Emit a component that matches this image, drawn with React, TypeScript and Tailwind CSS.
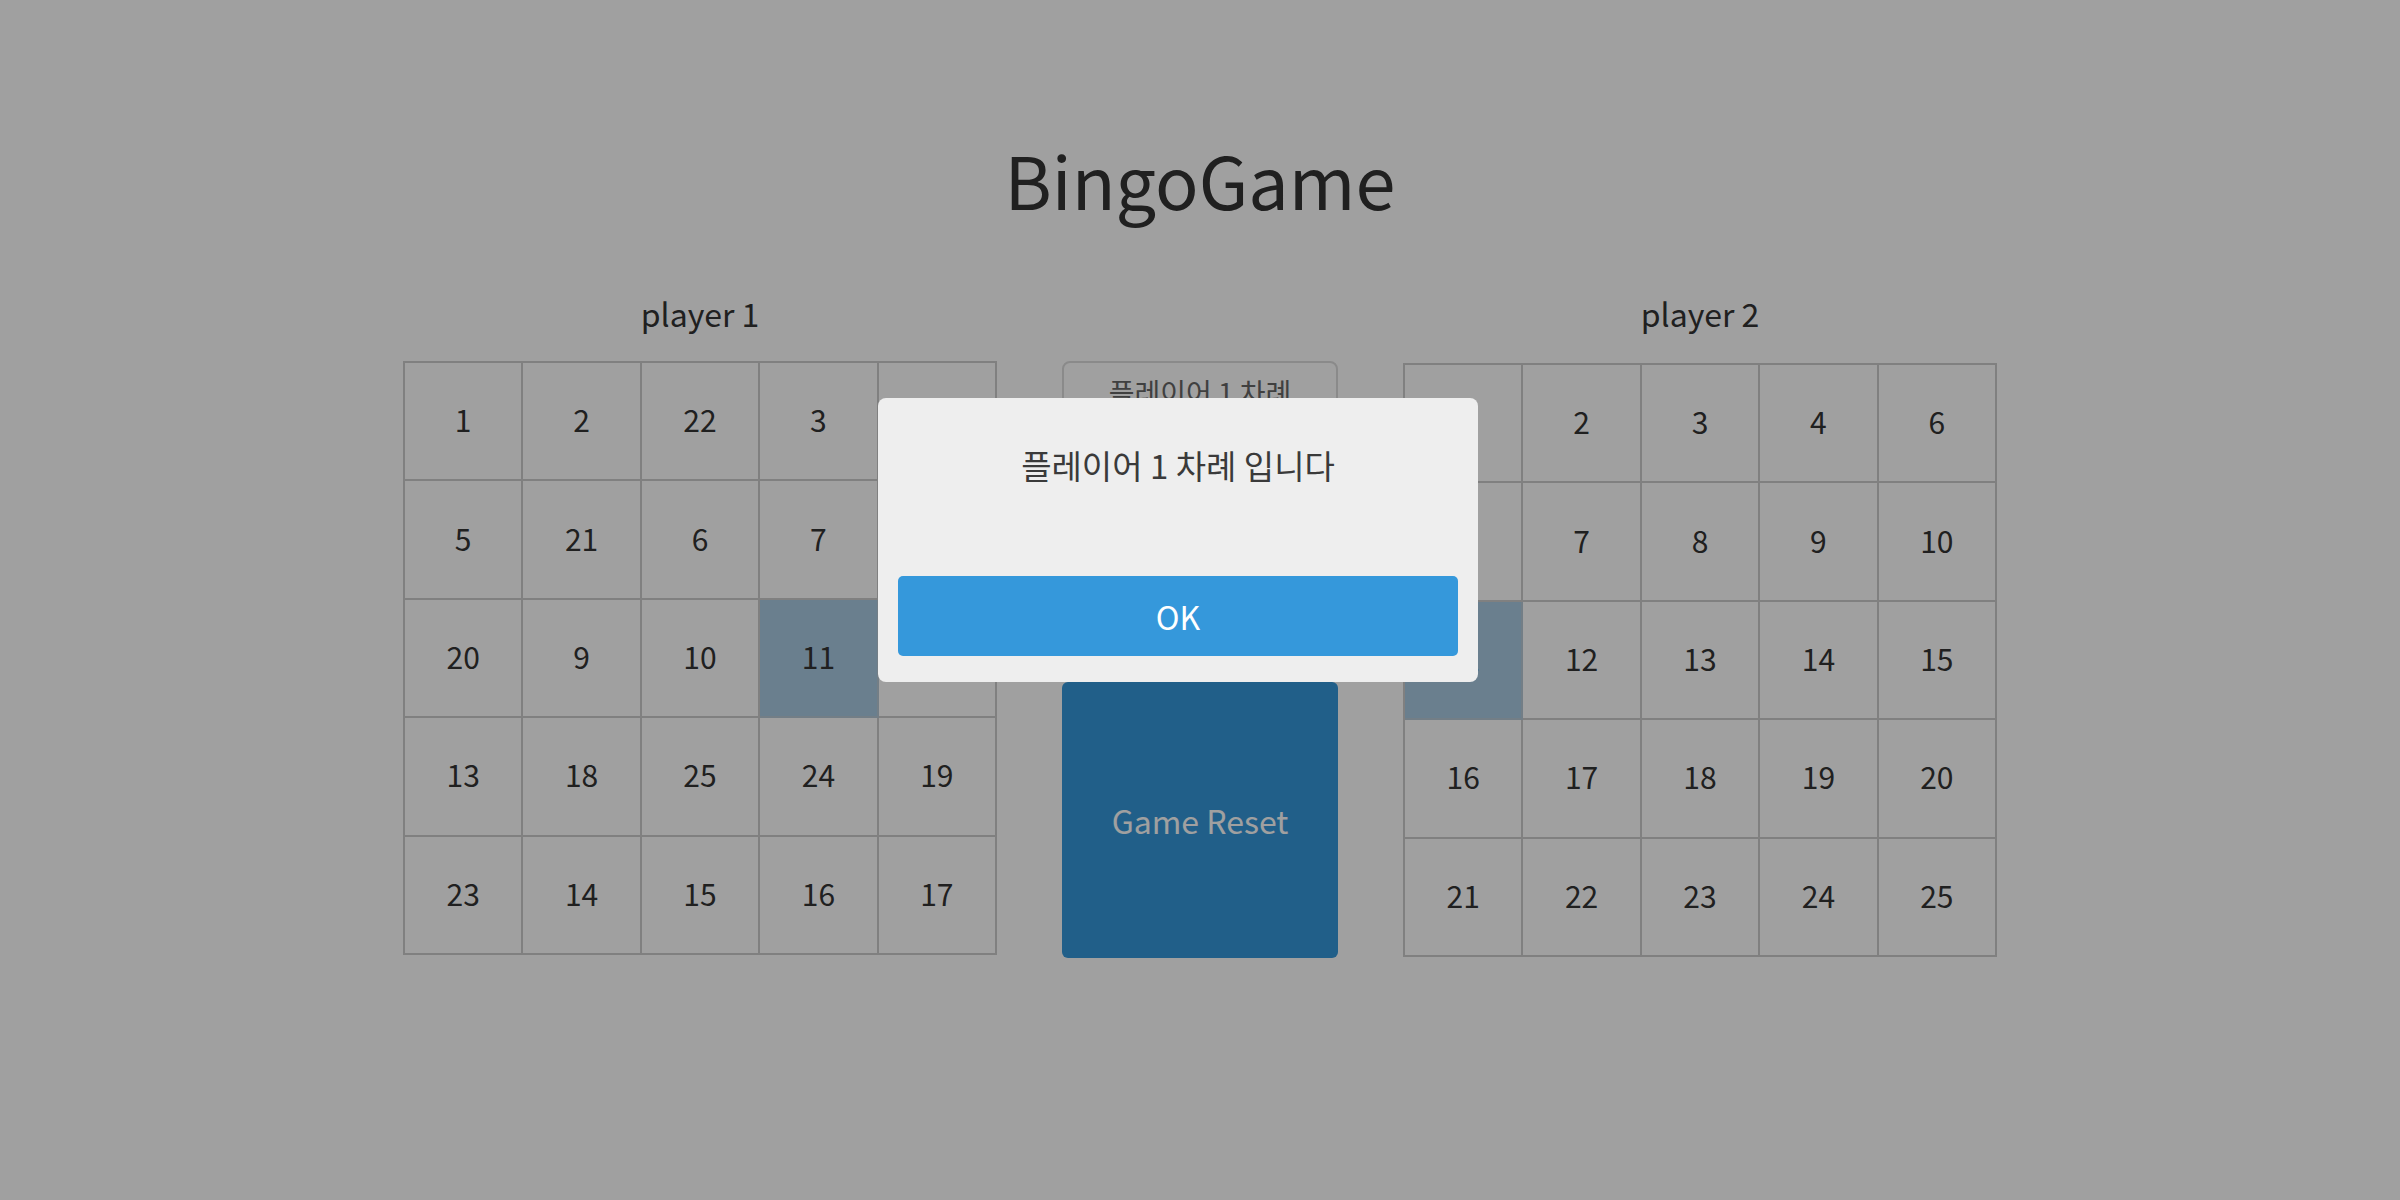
import React from 'react';

const board1 = [
  [1, 2, 22, 3, 4],
  [5, 21, 6, 7, 8],
  [20, 9, 10, 11, 12],
  [13, 18, 25, 24, 19],
  [23, 14, 15, 16, 17],
];

const board2 = [
  [1, 2, 3, 4, 6],
  [5, 7, 8, 9, 10],
  [11, 12, 13, 14, 15],
  [16, 17, 18, 19, 20],
  [21, 22, 23, 24, 25],
];

const Board: React.FC<{ cells: number[][]; checked: number[] }> = ({ cells, checked }) => {
  return (
    <div className="grid grid-cols-5 grid-rows-5 w-[594px] h-[594px] border-l-2 border-t-2 border-[#cccccc]">
      {cells.flat().map((n) => (
        <div
          key={n}
          className={
            checked.includes(n)
              ? 'flex items-center justify-center pb-[4px] border-r-2 border-b-2 border-[#b7c9d6] bg-[#a9cbe3] text-[30px] leading-none'
              : 'flex items-center justify-center pb-[4px] border-r-2 border-b-2 border-[#cccccc] text-[30px] leading-none'
          }
        >
          {n}
        </div>
      ))}
    </div>
  );
};

export default function App() {
  return (
    <div className="relative min-h-screen bg-white font-['Noto_Sans_CJK_KR',sans-serif] text-[#333333]">
      <div className="flex flex-col items-center pt-[143px]">
        <h1 className="text-[72px] leading-none font-normal">BingoGame</h1>

        <div className="grid grid-cols-[594px_276px_594px] gap-x-[65px] mt-[82px]">
          <div className="text-center text-[32px] leading-none">player 1</div>
          <div />
          <div className="text-center text-[32px] leading-none">player 2</div>

          <div className="mt-[32px]">
            <Board cells={board1} checked={[11]} />
          </div>

          <div className="mt-[32px] flex flex-col gap-[45px]">
            <div className="h-[276px] rounded-lg border-2 border-[#dcdcdc] pt-[15px] text-center text-[28px] leading-none text-[#666666]">
              플레이어 1 차례
            </div>
            <button className="h-[276px] rounded-md bg-[#3598db] text-[32px] text-white">
              Game Reset
            </button>
          </div>

          <div className="mt-[34px]">
            <Board cells={board2} checked={[11]} />
          </div>
        </div>
      </div>

      {/* alert */}
      <div className="absolute inset-0 bg-black/[0.373] flex justify-center items-start pt-[398px] pr-[44px]">
        <div className="w-[600px] rounded-lg bg-[#eeeeee] px-5 pt-[51px] pb-[26px]">
          <p className="text-center text-[33px] leading-none text-[#3a3a3a]">플레이어 1 차례 입니다</p>
          <button className="mt-[94px] w-full h-[80px] rounded-[5px] bg-[#3598db] text-[32px] text-white">
            OK
          </button>
        </div>
      </div>
    </div>
  );
}
